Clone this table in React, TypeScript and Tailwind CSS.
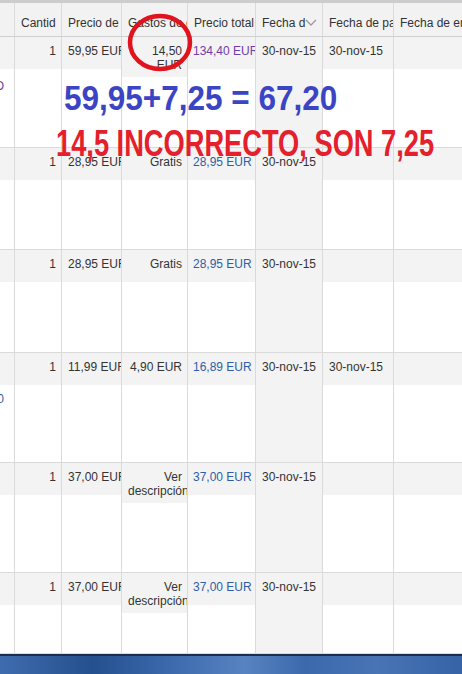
import { ReactNode } from 'react'

type Row = {
  h: string
  cant: string
  precio: string
  gastos: ReactNode
  total: string
  totalColor: string
  fecha: string
  fechaPago: string
  side?: ReactNode
}

const font = { fontFamily: '"Liberation Sans", Arial, sans-serif' }

const rows: Row[] = [
  {
    h: 'h-[111px]',
    cant: '1',
    precio: '59,95 EUR',
    gastos: (
      <>
        14,50
        <br />
        EUR
      </>
    ),
    total: '134,40 EUR',
    totalColor: 'text-[#6f3ea6]',
    fecha: '30-nov-15',
    fechaPago: '30-nov-15',
    side: <div className="mt-[8px] flex justify-end pr-[10px] text-[#6f3ea6]">PEDIDO</div>,
  },
  {
    h: 'h-[102px]',
    cant: '1',
    precio: '28,95 EUR',
    gastos: 'Gratis',
    total: '28,95 EUR',
    totalColor: 'text-[#2f5ea8]',
    fecha: '30-nov-15',
    fechaPago: '',
  },
  {
    h: 'h-[103px]',
    cant: '1',
    precio: '28,95 EUR',
    gastos: 'Gratis',
    total: '28,95 EUR',
    totalColor: 'text-[#2f5ea8]',
    fecha: '30-nov-15',
    fechaPago: '',
  },
  {
    h: 'h-[110px]',
    cant: '1',
    precio: '11,99 EUR',
    gastos: '4,90 EUR',
    total: '16,89 EUR',
    totalColor: 'text-[#2f5ea8]',
    fecha: '30-nov-15',
    fechaPago: '30-nov-15',
    side: <div className="mt-[5px] flex justify-end pr-[10px] text-[#2f5ea8]">12,30</div>,
  },
  {
    h: 'h-[110px]',
    cant: '1',
    precio: '37,00 EUR',
    gastos: (
      <>
        Ver
        <br />
        descripción
      </>
    ),
    total: '37,00 EUR',
    totalColor: 'text-[#2f5ea8]',
    fecha: '30-nov-15',
    fechaPago: '',
  },
  {
    h: 'flex-1',
    cant: '1',
    precio: '37,00 EUR',
    gastos: (
      <>
        Ver
        <br />
        descripción
      </>
    ),
    total: '37,00 EUR',
    totalColor: 'text-[#2f5ea8]',
    fecha: '30-nov-15',
    fechaPago: '',
  },
]

const band = 'min-h-[32px] bg-[#f3f3f3] pt-[7px] pb-[5px] leading-[14px]'

function Cell({ w, children, sorted, rest }: { w: string; children?: ReactNode; sorted?: boolean; rest?: ReactNode }) {
  return (
    <div className={`${w} flex shrink-0 flex-col overflow-hidden border-r border-[#dadada] ${sorted ? 'bg-[#f3f3f3]' : 'bg-white'}`}>
      {children}
      <div className="flex-1 overflow-hidden">{rest}</div>
    </div>
  )
}

function Header() {
  const th = 'flex h-full shrink-0 items-center overflow-hidden whitespace-nowrap border-r border-[#dadada] pl-[6px] pt-[6px]'
  return (
    <div className="flex h-[34px] shrink-0 border-b border-[#cfcfcf] bg-[#f2f2f2] text-[12px] text-[#333]">
      <div className={`${th} w-[15px]`} />
      <div className={`${th} w-[47px] pr-[5px]`}>
        <span className="overflow-hidden">Cantidad</span>
      </div>
      <div className={`${th} w-[60px]`}>Precio de venta</div>
      <div className={`${th} w-[66px]`}>Gastos de envío</div>
      <div className={`${th} w-[68px]`}>Precio total</div>
      <div className={`${th} w-[67px] justify-between pr-[5px]`}>
        <span className="overflow-hidden">Fecha d</span>
        <svg width="12" height="7" viewBox="0 0 12 7" className="mb-[1px] shrink-0">
          <polyline points="1,1 6,6 11,1" fill="none" stroke="#9c9c9c" strokeWidth="1.4" />
        </svg>
      </div>
      <div className={`${th} w-[71px]`}>Fecha de pago</div>
      <div className={`${th} flex-1 border-r-0`}>Fecha de envío</div>
    </div>
  )
}

export default function App() {
  return (
    <div className="relative flex h-[674px] w-[462px] flex-col overflow-hidden bg-white" style={font}>
      <div className="h-[3px] shrink-0 bg-[#cccccc]" />
      <Header />

      <div className="flex flex-1 flex-col overflow-hidden text-[12px] text-[#333]">
        {rows.map((r, i) => (
          <div key={i} className={`${r.h} flex shrink-0 border-b border-[#dadada]`}>
            <Cell w="w-[15px]" rest={r.side}>
              <div className={band} />
            </Cell>
            <Cell w="w-[47px]">
              <div className={`${band} pr-[5px] text-right`}>{r.cant}</div>
            </Cell>
            <Cell w="w-[60px]">
              <div className={`${band} whitespace-nowrap pl-[6px]`}>{r.precio}</div>
            </Cell>
            <Cell w="w-[66px]">
              <div className={`${band} pl-[6px] pr-[5px] text-right`}>{r.gastos}</div>
            </Cell>
            <Cell w="w-[68px]">
              <div className={`${band} whitespace-nowrap pl-[5px] ${r.totalColor}`}>{r.total}</div>
            </Cell>
            <Cell w="w-[67px]" sorted>
              <div className={`${band} whitespace-nowrap pl-[6px]`}>{r.fecha}</div>
            </Cell>
            <Cell w="w-[71px]">
              <div className={`${band} whitespace-nowrap pl-[6px]`}>{r.fechaPago}</div>
            </Cell>
            <div className="flex flex-1 flex-col bg-white">
              <div className={band} />
            </div>
          </div>
        ))}
      </div>

      {/* taskbar */}
      <div className="h-[20px] shrink-0 border-t-2 border-[#1d2d4d] bg-[linear-gradient(90deg,#3f6cae_0%,#24508f_20%,#3a68aa_36%,#5783c2_53%,#3b69ab_66%,#4874b5_82%,#3563a5_100%)]" />

      {/* annotations */}
      <svg className="absolute left-[126px] top-[12px]" width="68" height="62" viewBox="0 0 68 62">
        <ellipse cx="34" cy="30.5" rx="30" ry="26.5" fill="none" stroke="#e0141e" strokeWidth="4.5" />
      </svg>
      <div className="absolute left-[64px] top-[80px] origin-left scale-x-[0.9] whitespace-nowrap text-[35px] font-bold leading-none text-[#3b45c4]">
        59,95+7,25 = 67,20
      </div>
      <div className="absolute left-[56px] top-[126px] origin-left scale-x-[0.757] whitespace-nowrap text-[36px] font-bold leading-none text-[#e4202c]">
        14,5 INCORRECTO, SON 7,25
      </div>
    </div>
  )
}
